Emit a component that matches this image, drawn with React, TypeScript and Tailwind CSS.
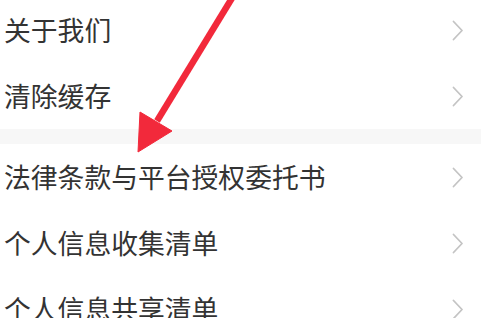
import React from "react";

const Chevron = () => (
  <svg width="12" height="21" viewBox="0 0 12 21" fill="none" className="shrink-0">
    <path d="M1.5 1.5 L10 10.5 L1.5 19.5" stroke="#c4c4c4" strokeWidth="1.8" strokeLinecap="round" strokeLinejoin="round" />
  </svg>
);

const Row = ({ label }: { label: string }) => (
  <div className="flex h-[66px] items-center justify-between pl-[4px] pr-[17px]">
    <span className="text-[26.8px] leading-none text-[#333333]" style={{ fontFamily: '"Noto Sans CJK SC", "Noto Sans", sans-serif' }}>
      {label}
    </span>
    <Chevron />
  </div>
);

export default function App() {
  return (
    <div className="relative h-[318px] w-[481px] overflow-hidden bg-white">
      <div className="-mt-[3px] flex flex-col">
        <Row label="关于我们" />
        <Row label="清除缓存" />
        <div className="h-[15px] bg-[#f7f7f7]" />
        <Row label="法律条款与平台授权委托书" />
        <Row label="个人信息收集清单" />
        <Row label="个人信息共享清单" />
      </div>
      <svg className="pointer-events-none absolute left-0 top-0" width="481" height="318" viewBox="0 0 481 318">
        <line x1="240" y1="-15" x2="157" y2="121" stroke="#f2293b" strokeWidth="6.5" />
        <polygon points="140,112 172,131 138,152" fill="#f2293b" stroke="#f2293b" strokeWidth="1" strokeLinejoin="round" />
      </svg>
    </div>
  );
}
